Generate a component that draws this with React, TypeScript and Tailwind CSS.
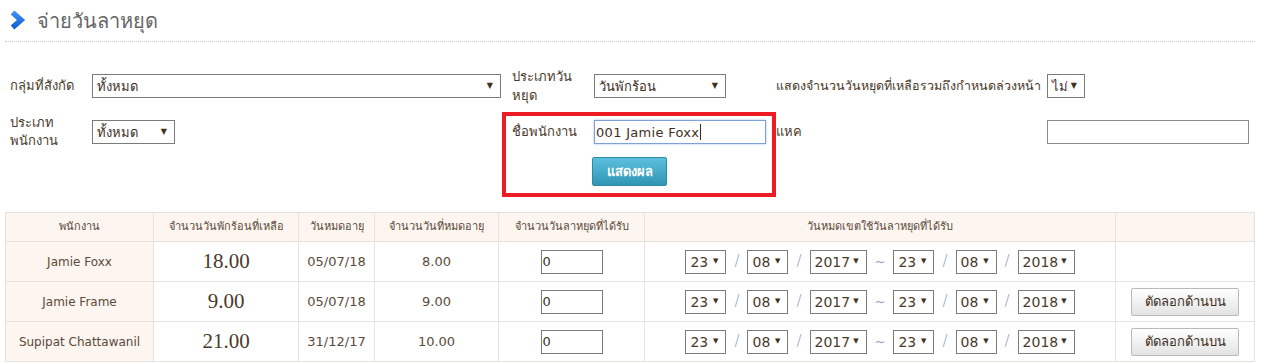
import React from "react";

const font = { fontFamily: "Tahoma, 'DejaVu Sans', 'Noto Sans', sans-serif" };

function FakeSelect({ text, w, className = "" }: { text: string; w: string; className?: string }) {
  return (
    <div
      className={`${w} h-[24px] border border-[#7b7b7b] bg-white flex items-center justify-between pl-[4px] pr-[7px] text-[13px] text-[#3f2f1f] ${className}`}
    >
      <span className="leading-none">{text}</span>
      <span className="text-[8px] text-[#3f3020] leading-none">▼</span>
    </div>
  );
}

function DateSel({ text, w }: { text: string; w: string }) {
  return (
    <div className={`${w} h-[24px] border border-[#7b7b7b] bg-white flex items-center justify-between pl-[4px] pr-[7px] text-[14px] text-[#4a3a2a]`}>
      <span className="leading-none">{text}</span>
      <span className="text-[7px] text-[#3f3020] leading-none">▼</span>
    </div>
  );
}

function Slash() {
  return <span className="text-[15px] font-light text-[#8aa0c8] mx-[8px] leading-none">/</span>;
}

function DateRange() {
  return (
    <div className="flex items-center justify-center">
      <DateSel text="23" w="w-[41px]" />
      <Slash />
      <DateSel text="08" w="w-[41px]" />
      <Slash />
      <DateSel text="2017" w="w-[57px]" />
      <span className="text-[13px] text-[#8aa0c8] mx-[8px] leading-none">~</span>
      <DateSel text="23" w="w-[41px]" />
      <Slash />
      <DateSel text="08" w="w-[41px]" />
      <Slash />
      <DateSel text="2018" w="w-[57px]" />
    </div>
  );
}

const rows = [
  { name: "Jamie Foxx", left: "18.00", exp: "05/07/18", expDays: "8.00", btn: false },
  { name: "Jamie Frame", left: "9.00", exp: "05/07/18", expDays: "9.00", btn: true },
  { name: "Supipat Chattawanil", left: "21.00", exp: "31/12/17", expDays: "10.00", btn: true },
];

export default function App() {
  return (
    <div className="relative w-[1267px] h-[364px] bg-white overflow-hidden" style={font}>
      <div className="ml-[5px] w-[1250px]">
        {/* Header */}
        <div className="h-[42px] border-b border-dotted border-[#c9c9c9] flex items-center pl-[3px]">
          <svg width="18" height="22" viewBox="0 0 18 22" className="mt-[-2px]">
            <defs>
              <linearGradient id="chev" x1="0" y1="0" x2="0" y2="1">
                <stop offset="0" stopColor="#3d8cf5" />
                <stop offset="1" stopColor="#1363d8" />
              </linearGradient>
            </defs>
            <polyline points="4.5,3.5 13,11 4.5,18.5" fill="none" stroke="url(#chev)" strokeWidth="5.5" strokeLinejoin="miter" />
          </svg>
          <span className="ml-[11px] text-[20px] text-[#666666] leading-none">จ่ายวันลาหยุด</span>
        </div>

        {/* Form row 1 */}
        <div className="mt-[28px] h-[32px] flex items-center pl-[5px] text-[13px] text-[#4a3a2a]">
          <div className="w-[82px]">กลุ่มที่สังกัด</div>
          <div className="w-[410px]">
            <FakeSelect text="ทั้งหมด" w="w-[409px]" />
          </div>
          <div className="w-[92px] pl-[10px] leading-[19px] pr-[4px]">ประเภทวันหยุด</div>
          <div className="w-[182px]">
            <FakeSelect text="วันพักร้อน" w="w-[132px]" />
          </div>
          <div className="w-[271px] whitespace-nowrap text-[12.5px]">แสดงจำนวนวันหยุดที่เหลือรวมถึงกำหนดล่วงหน้า</div>
          <div className="flex-1">
            <FakeSelect text="ไม่" w="w-[38px]" />
          </div>
        </div>

        {/* Form row 2 */}
        <div className="mt-[13px] h-[34px] flex items-center pl-[5px] text-[13px] text-[#4a3a2a]">
          <div className="w-[82px] leading-[18px] pr-[20px]">ประเภทพนักงาน</div>
          <div className="w-[410px]">
            <FakeSelect text="ทั้งหมด" w="w-[83px]" />
          </div>
          <div className="w-[92px] pl-[10px]">ชื่อพนักงาน</div>
          <div className="w-[182px]">
            <div className="w-[172px] h-[24px] border border-[#7fa1d8] shadow-[0_0_2px_#9dbbe8] bg-white flex items-center pl-[1px] text-[13px] text-[#3f2f1f]" style={{ fontFamily: "'DejaVu Sans', sans-serif" }}>
              <span className="leading-none tracking-[0.3px]">001 Jamie Foxx</span>
              <span className="w-[1px] h-[16px] bg-[#3a2a1a] ml-[1px]" />
            </div>
          </div>
          <div className="w-[271px]">แหค</div>
          <div className="flex-1">
            <div className="w-[202px] h-[24px] border border-[#8a8a8a] bg-white" />
          </div>
        </div>

        {/* Button row */}
        <div className="mt-[8px] ml-[587px]">
          <button className="w-[75px] h-[29px] rounded-[2px] border border-[#2f8aa6] bg-gradient-to-b from-[#5bc0de] to-[#2f96b4] text-white text-[13px] font-bold">
            แสดงผล
          </button>
        </div>

        {/* Table */}
        <table className="mt-[26px] w-[1249px] table-fixed border-collapse text-[#5b4a3b]">
          <colgroup>
            <col className="w-[148px]" />
            <col className="w-[145px]" />
            <col className="w-[76px]" />
            <col className="w-[124px]" />
            <col className="w-[146px]" />
            <col className="w-[471px]" />
            <col className="w-[139px]" />
          </colgroup>
          <thead>
            <tr className="h-[29px] bg-[#fdf5ef] text-[11px] font-normal">
              <th className="border border-[#e6e2de] font-normal">พนักงาน</th>
              <th className="border border-[#e6e2de] font-normal">จำนวนวันพักร้อนที่เหลือ</th>
              <th className="border border-[#e6e2de] font-normal">วันหมดอายุ</th>
              <th className="border border-[#e6e2de] font-normal">จำนวนวันที่หมดอายุ</th>
              <th className="border border-[#e6e2de] font-normal">จำนวนวันลาหยุดที่ได้รับ</th>
              <th className="border border-[#e6e2de] font-normal">วันหมดเขตใช้วันลาหยุดที่ได้รับ</th>
              <th className="border border-[#e6e2de] font-normal"></th>
            </tr>
          </thead>
          <tbody>
            {rows.map((r) => (
              <tr key={r.name} className="h-[40px]">
                <td className="border border-[#e6e2de] bg-[#fdf5ef] text-center text-[12px]">{r.name}</td>
                <td className="border border-[#e6e2de] text-center text-[21px] text-[#4a3a2a]" style={{ fontFamily: "'Liberation Serif', serif" }}>
                  {r.left}
                </td>
                <td className="border border-[#e6e2de] text-center text-[13px]">{r.exp}</td>
                <td className="border border-[#e6e2de] text-center text-[13px]">{r.expDays}</td>
                <td className="border border-[#e6e2de]">
                  <div className="flex justify-center">
                    <div className="w-[62px] h-[24px] border border-[#7b7b7b] bg-white flex items-center pl-[1px] text-[13px] text-[#3f2f1f]">
                      0
                    </div>
                  </div>
                </td>
                <td className="border border-[#e6e2de]">
                  <DateRange />
                </td>
                <td className="border border-[#e6e2de]">
                  {r.btn && (
                    <div className="flex justify-center">
                      <button className="w-[108px] h-[28px] rounded-[2px] border border-[#b9b9b9] bg-gradient-to-b from-[#ffffff] to-[#e3e3e3] text-[13px] text-[#3f2f1f]">
                        ตัดลอกด้านบน
                      </button>
                    </div>
                  )}
                </td>
              </tr>
            ))}
          </tbody>
        </table>
      </div>

      {/* Red annotation box */}
      <div className="absolute left-[502px] top-[112px] w-[274px] h-[85px] border-[4px] border-[#ed1c24] pointer-events-none" />
    </div>
  );
}
